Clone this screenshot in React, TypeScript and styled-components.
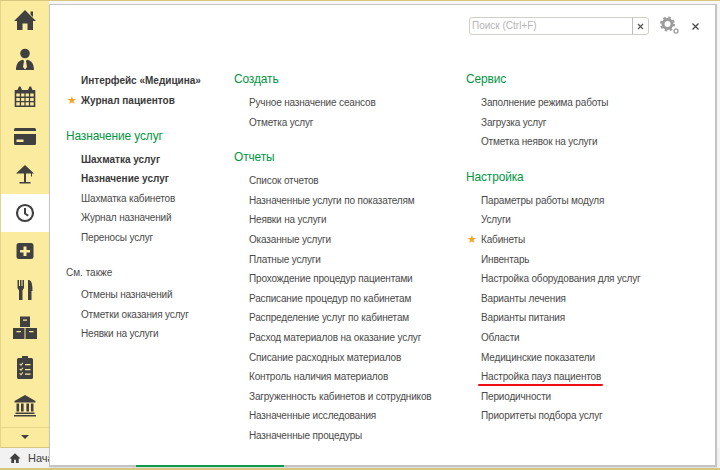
import React from "react";
import styled, { createGlobalStyle } from "styled-components";

const Global = createGlobalStyle`
  html, body { margin: 0; padding: 0; background: #fff; }
  #root { width: 720px; height: 470px; }
  * { box-sizing: border-box; }
`;

const Frame = styled.div`
  position: relative;
  width: 720px;
  height: 470px;
  overflow: hidden;
  display: flex;
  flex-direction: column;
  background: #f7f7f7;
  border-top: 1px solid #d6c67e;
  border-bottom: 2px solid #d6c67e;
  font-family: "Liberation Sans", Arial, sans-serif;
`;

const Body = styled.div`
  flex: 1;
  display: flex;
  min-height: 0;
`;

const Sidebar = styled.nav`
  width: 49px;
  display: flex;
  flex-direction: column;
  background: #fbeb9f;
  border-left: 1px solid #e3d48a;
`;

const NavItem = styled.div<{ $active?: boolean }>`
  height: 38.5px;
  flex: none;
  display: flex;
  align-items: center;
  justify-content: center;
  background: ${(p) => (p.$active ? "#fff" : "transparent")};
  color: #404040;
`;

const MoreButton = styled.div`
  flex: 1;
  margin-top: 2px;
  display: flex;
  align-items: center;
  justify-content: center;
  border-top: 1px solid #e5d68c;
  border-bottom: 1px solid #d6c67e;
`;

const Caret = styled.div`
  width: 0;
  height: 0;
  border-left: 4px solid transparent;
  border-right: 4px solid transparent;
  border-top: 4px solid #404040;
`;

const BottomBar = styled.div`
  height: 20px;
  flex: none;
  display: flex;
  align-items: center;
  gap: 7px;
  padding-left: 9px;
  background: #f2f2f2;
  color: #404040;
  font-size: 11px;
`;

const Popup = styled.section`
  position: absolute;
  left: 49px;
  top: 3px;
  width: 668px;
  height: 463px;
  background: #fff;
  border: 1px solid #c4c4c4;
  border-width: 1px 2px 2px 1px;
  box-shadow: 0 1px 1px rgba(0, 0, 0, 0.08);
`;

const Tools = styled.div`
  height: 46px;
  display: flex;
  align-items: center;
  justify-content: flex-end;
  padding: 0 16px 4px 0;
  gap: 0;
`;

const Search = styled.div`
  width: 180px;
  height: 18px;
  display: flex;
  border: 1px solid #cfcfc8;
  border-radius: 3px;
  margin-right: 10px;
`;

const SearchText = styled.div`
  flex: 1;
  padding-left: 2px;
  color: #b4b4b4;
  font-size: 10px;
  line-height: 16px;
  border-right: 1px solid #bdbdbd;
`;

const SearchClear = styled.div`
  width: 15px;
  display: flex;
  align-items: center;
  justify-content: center;
`;

const CloseButton = styled.div`
  margin-left: 11px;
  display: flex;
`;

const Columns = styled.div`
  display: grid;
  grid-template-columns: 168px 232px 1fr;
  padding-left: 16px;
`;

const Column = styled.div<{ $top: number }>`
  padding-top: ${(p) => p.$top}px;
  display: flex;
  flex-direction: column;
`;

const Heading = styled.h3<{ $gap: number }>`
  margin: ${(p) => p.$gap}px 0 0;
  height: 20px;
  color: #00963f;
  font-size: 11.9px;
  font-weight: 400;
  letter-spacing: -0.1px;
  line-height: 20px;
  white-space: nowrap;
`;

const SubHeading = styled.h4<{ $gap: number }>`
  margin: ${(p) => p.$gap}px 0 0;
  height: 18px;
  color: #4a4a4a;
  font-size: 10px;
  font-weight: 400;
  line-height: 18px;
`;

const List = styled.ul<{ $gap?: number }>`
  list-style: none;
  margin: ${(p) => p.$gap ?? 4}px 0 0;
  padding: 0 0 0 15px;
`;

const Row = styled.li<{ $bold?: boolean; $star?: boolean; $marked?: boolean }>`
  position: relative;
  height: 19.6px;
  line-height: 19.6px;
  font-size: 10px;
  font-weight: ${(p) => (p.$bold ? 700 : 400)};
  letter-spacing: ${(p) => (p.$bold ? "0" : "-0.16px")};
  color: ${(p) => (p.$bold ? "#3a3a3a" : "#4a4a4a")};
  white-space: nowrap;

  &::before {
    content: ${(p) => (p.$star ? '"★"' : "none")};
    position: absolute;
    left: -14px;
    top: 0;
    color: #f5a623;
    font-family: "DejaVu Sans", sans-serif;
    font-size: 11px;
    font-weight: 400;
  }

  &::after {
    content: ${(p) => (p.$marked ? '""' : "none")};
    position: absolute;
    left: -3px;
    top: 17px;
    width: 125px;
    height: 2px;
    border-radius: 1px;
    background: #f00a14;
  }
`;

const Tabs = styled.div`
  position: absolute;
  left: 133px;
  bottom: 0;
  width: 154px;
  height: 3px;
  padding: 0 1px;
  border-left: 1px solid #c4c4c4;
  border-right: 1px solid #c4c4c4;
`;

const TabMark = styled.div`
  height: 2px;
  margin: 0 1px;
  background: #0d9a4a;
`;

const Ico = ({ children }: { children: React.ReactNode }) => (
  <svg width={26} height={26} viewBox="0 0 26 26" fill="#404040">
    {children}
  </svg>
);

const nav: React.ReactNode[] = [
  <Ico key="home"><path d="M13 3 24 14h-3v9h-5.500v-6.500h-5V23H5v-9H2zM18.500 4.500h2.500v5.500l-2.500-2.500z" /></Ico>,
  <Ico key="user"><circle cx="13" cy="7.500" r="4.800" /><path d="M4 24c0-6.500 3-9.700 7-10.200l1 1.200-1 6 2 2.500 2-2.500-1-6 1-1.200c4 .5 7 3.700 7 10.200z" /></Ico>,
  <Ico key="cal"><path fillRule="evenodd" d="M7 2.500h1.500L10 6h6l1.500-3.500H19L20.500 6h2.800V23H2.700V6h2.800zM4.300 9.500v3.100h3.500V9.500zm4.800 0v3.100h3.300V9.500zm4.500 0v3.100h3.300V9.500zm4.600 0v3.100h3.500V9.500zM4.300 14v3h3.500v-3zm4.800 0v3h3.300v-3zm4.500 0v3h3.300v-3zm4.600 0v3h3.500v-3zM4.300 18.300v3.200h3.500v-3.200zm4.800 0v3.200h3.300v-3.200zm4.500 0v3.200h3.300v-3.200zm4.600 0v3.200h3.500v-3.200z" /></Ico>,
  <Ico key="card"><path fillRule="evenodd" d="M3.500 5h19A1.500 1.500 0 0 1 24 6.500V8H2V6.500A1.500 1.500 0 0 1 3.500 5zM2 11h22v9.500a1.500 1.500 0 0 1-1.500 1.500h-19A1.500 1.500 0 0 1 2 20.500zm2.500 5.500v2.500h7v-2.500z" /></Ico>,
  <Ico key="lamp"><path d="M13 4 22 12.500H4zM12 12h2v9h-2zM7.500 21h11v1.500h-11zM19 12h1v3.500h-1z" /></Ico>,
  <Ico key="clock"><circle cx="13" cy="13" r="8" fill="none" stroke="#404040" strokeWidth="2.200" /><path d="M13 8v5.500l3.200 2.300" fill="none" stroke="#404040" strokeWidth="2" /></Ico>,
  <Ico key="plus"><path fillRule="evenodd" d="M7 5h12a2.500 2.500 0 0 1 2.500 2.500v11A2.500 2.500 0 0 1 19 21H7a2.500 2.500 0 0 1-2.500-2.500v-11A2.500 2.500 0 0 1 7 5zm4.500 3.500v3.500H8v2.500h3.500V18H14.500v-3.500H18V12h-3.500V8.500z" /></Ico>,
  <Ico key="food"><path d="M5.500 3H7v6h1V3h1.500v6h1V3H12v8l-1.500 2.500V23H7V13.500L5.500 11zM16 3h1c3 1 3.500 5 3.500 11H19.500v9H16z" /></Ico>,
  <Ico key="box"><path fillRule="evenodd" d="M8 1.500h10v10.500H8zm3 3v1.300h4V4.500zM1 13h11.500v11H1zm3.500 3v1.300h4.500V16zM13.500 13H25v11H13.500zm3.500 3v1.300h4.500V16z" /></Ico>,
  <Ico key="list"><path fillRule="evenodd" d="M10 2h6v2h3.500A1.500 1.500 0 0 1 21 5.500V23.500a1.500 1.500 0 0 1-1.500 1.500h-13A1.500 1.500 0 0 1 5 23.500V5.500A1.500 1.500 0 0 1 6.500 4H10zM8 9.500l1 1 1.500-2 .8.600-2.200 3-1.800-1.900zm5 .5h5.500v1.300H13zM8 14.500l1 1 1.500-2 .8.600-2.200 3-1.800-1.900zm5 .5h5.500v1.300H13zM8 19l1 1 1.500-2 .8.600-2.200 3-1.800-1.900zm5 .5h5.500v1.300H13z" /></Ico>,
  <Ico key="bank"><path d="M13 3 23.500 9v1.500h-21V9zM4.500 11.500h2.600v8H4.500zM9 11.500h2.600v8H9zM14.400 11.500H17v8h-2.600zM18.900 11.500h2.600v8h-2.600zM3.500 20.500h19V22h-19zM2 23h22v1.500H2z" /></Ico>,
];

type Item = string | { t: string; bold?: boolean; star?: boolean; marked?: boolean };

const Rows = ({ items, gap }: { items: Item[]; gap?: number }) => (
  <List $gap={gap}>
    {items.map((it) => {
      const o = typeof it === "string" ? { t: it } : it;
      return (
        <Row key={o.t} $bold={o.bold} $star={o.star} $marked={o.marked}>
          {o.t}
        </Row>
      );
    })}
  </List>
);

export default function App() {
  return (
    <Frame>
      <Global />
      <Body>
        <Sidebar>
          {nav.map((icon, i) => (
            <NavItem key={i} $active={i === 5}>
              {icon}
            </NavItem>
          ))}
          <MoreButton>
            <Caret />
          </MoreButton>
        </Sidebar>
      </Body>
      <BottomBar>
        <svg width="12" height="12" viewBox="0 0 26 26" fill="#404040">
          <path d="M13 2.500 25 14h-4v10h-6v-7h-4v7H5V14H1z" />
        </svg>
        Начальная страница
      </BottomBar>
      <Popup>
        <Tools>
          <Search>
            <SearchText>Поиск (Ctrl+F)</SearchText>
            <SearchClear>
              <svg width="7" height="7" viewBox="0 0 7 7" stroke="#555" strokeWidth="1.200">
                <path d="M1 1l5 5M6 1 1 6" />
              </svg>
            </SearchClear>
          </Search>
          <svg width="22" height="22" viewBox="0 0 22 22">
            <circle cx="8.500" cy="9" r="4.500" fill="none" stroke="#9c9c9c" strokeWidth="3" />
            <circle cx="8.500" cy="9" r="6.500" fill="none" stroke="#9c9c9c" strokeWidth="2" strokeDasharray="2.550 2.550" />
            <circle cx="17" cy="16" r="2" fill="none" stroke="#a8a8a8" strokeWidth="1.500" />
          </svg>
          <CloseButton>
            <svg width="7" height="7" viewBox="0 0 7 7" stroke="#444" strokeWidth="1.200">
              <path d="M.5.5l6 6M6.500.5l-6 6" />
            </svg>
          </CloseButton>
        </Tools>
        <Columns>
          <Column $top={20}>
            <Rows
              gap={0}
              items={[
                { t: "Интерфейс «Медицина»", bold: true },
                { t: "Журнал пациентов", bold: true, star: true },
              ]}
            />
            <Heading $gap={15.4}>Назначение услуг</Heading>
            <Rows
              items={[
                { t: "Шахматка услуг", bold: true },
                { t: "Назначение услуг", bold: true },
                "Шахматка кабинетов",
                "Журнал назначений",
                "Переносы услуг",
              ]}
            />
            <SubHeading $gap={16.4}>См. также</SubHeading>
            <Rows items={["Отмены назначений", "Отметки оказания услуг", "Неявки на услуги"]} gap={3} />
          </Column>
          <Column $top={18}>
            <Heading $gap={0}>Создать</Heading>
            <Rows items={["Ручное назначение сеансов", "Отметка услуг"]} />
            <Heading $gap={15}>Отчеты</Heading>
            <Rows
              items={[
                "Список отчетов",
                "Назначенные услуги по показателям",
                "Неявки на услуги",
                "Оказанные услуги",
                "Платные услуги",
                "Прохождение процедур пациентами",
                "Расписание процедур по кабинетам",
                "Распределение услуг по кабинетам",
                "Расход материалов на оказание услуг",
                "Списание расходных материалов",
                "Контроль наличия материалов",
                "Загруженность кабинетов и сотрудников",
                "Назначенные исследования",
                "Назначенные процедуры",
              ]}
            />
          </Column>
          <Column $top={18}>
            <Heading $gap={0}>Сервис</Heading>
            <Rows items={["Заполнение режима работы", "Загрузка услуг", "Отметка неявок на услуги"]} />
            <Heading $gap={15}>Настройка</Heading>
            <Rows
              items={[
                "Параметры работы модуля",
                "Услуги",
                { t: "Кабинеты", star: true },
                "Инвентарь",
                "Настройка оборудования для услуг",
                "Варианты лечения",
                "Варианты питания",
                "Области",
                "Медицинские показатели",
                { t: "Настройка пауз пациентов", marked: true },
                "Периодичности",
                "Приоритеты подбора услуг",
              ]}
            />
          </Column>
        </Columns>
      </Popup>
      <Tabs>
        <TabMark />
      </Tabs>
    </Frame>
  );
}
